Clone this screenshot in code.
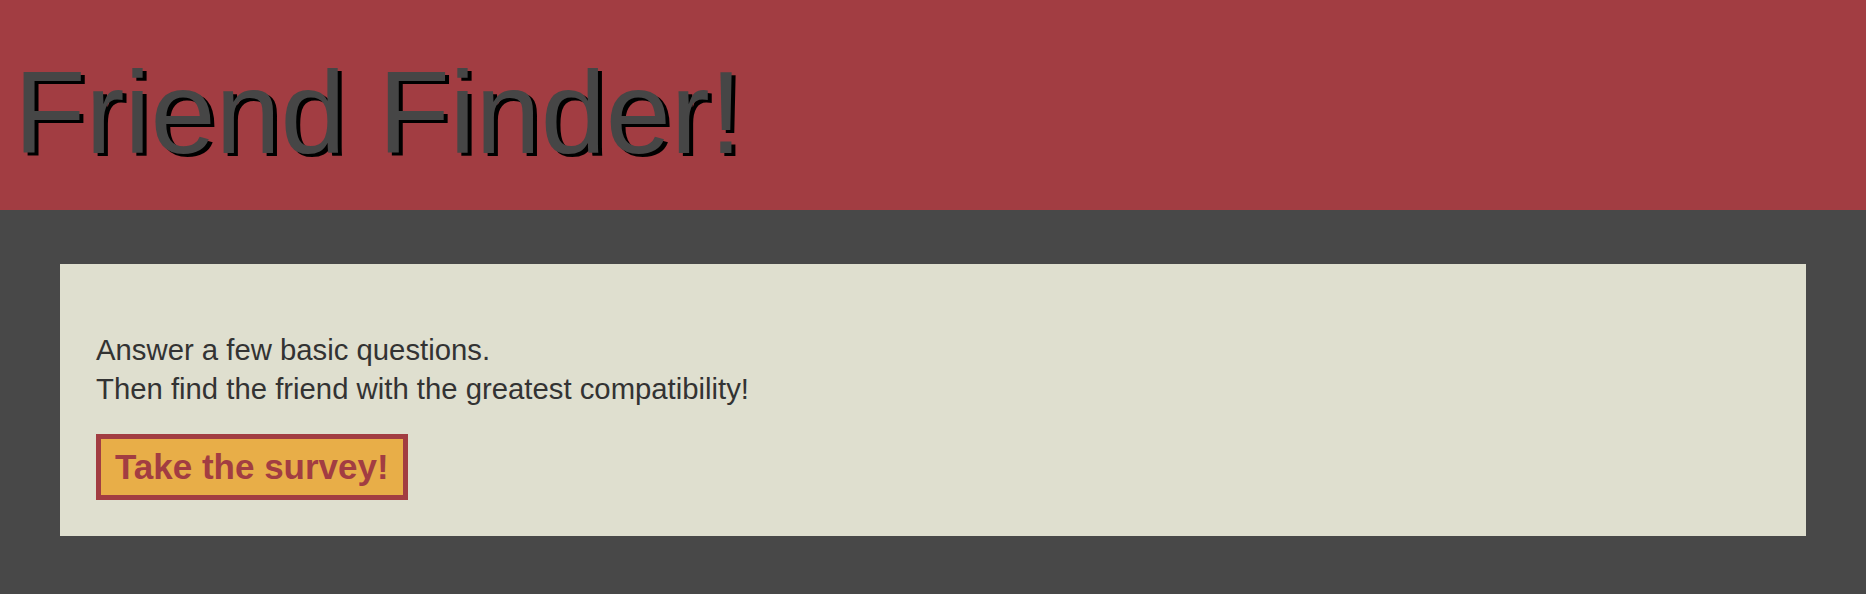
export default function App() {
  return (
    <div className="min-h-[594px] bg-[#484848] font-['Liberation_Sans',Arial,sans-serif]">
      <header className="h-[210px] bg-[#a23d42] pt-[54px] pl-[14px]">
        <h1 className="text-[117px] leading-none text-[#464646] [text-shadow:4px_3px_0_#000] whitespace-nowrap">
          Friend Finder!
        </h1>
      </header>

      <main className="px-[60px] pt-[54px] pb-[58px]">
        <section className="bg-[#dfdfcf] pl-[36px] pt-[66px] pb-[36px]">
          <p className="text-[29.3px] leading-[39px] text-[#333333]">
            Answer a few basic questions.
            <br />
            Then find the friend with the greatest compatibility!
          </p>
          <button className="mt-[26px] border-[5px] border-[#a23d42] bg-[#e8ae48] px-[14px] py-[9px] text-[35px] font-bold leading-[38px] text-[#a23d42]">
            Take the survey!
          </button>
        </section>
      </main>
    </div>
  );
}
